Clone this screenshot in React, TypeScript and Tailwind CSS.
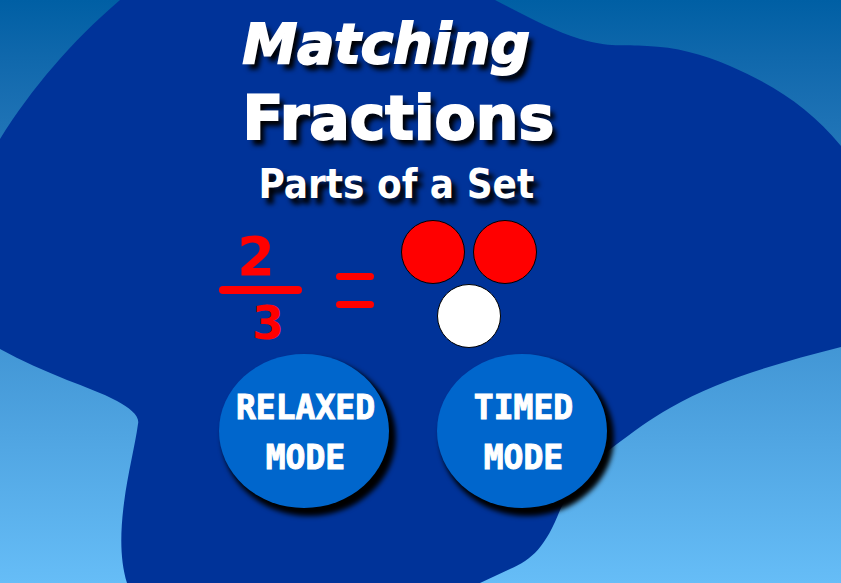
import type { ReactNode } from "react";

function Backdrop() {
  return (
    <svg
      className="absolute inset-0 -z-10 h-full w-full"
      viewBox="0 0 841 583"
      preserveAspectRatio="none"
      aria-hidden="true"
    >
      <path
        fill="#003399"
        d="M120 0C71 42 32 88 0 139V349C22 361 45 371 67 380C85 387 102 393 117 401C130 408 140 416 138 424C135 446 128 472 124 503C120 534 120 560 127 583H480L510 569C532 560 546 546 560 510C575 480 595 462 613 447C633 432 650 419 670 408C720 379 779 363 841 347V146C810 108 774 85 730 66C703 54 675 47 647 46C623 44 610 48 580 39C552 30 528 17 495 0Z"
      />
    </svg>
  );
}

function Disc({ className }: { className: string }) {
  return <div className={`size-16 rounded-full border border-black ${className}`} />;
}

function ModeButton({ children }: { children: ReactNode }) {
  return (
    <button
      type="button"
      className="h-[154px] w-[170px] cursor-pointer rounded-[50%] bg-[#0066cc] pt-1 pl-1 font-['DejaVu_Sans_Mono',monospace] text-[33px] leading-[50px] font-bold text-white shadow-[5px_6px_5px_2px_#000] [-webkit-text-stroke:1px_#fff]"
    >
      {children}
    </button>
  );
}

export default function App() {
  return (
    <main className="relative isolate min-h-screen overflow-hidden bg-linear-to-b from-[#005fa4] to-[#66bdf7]">
      <Backdrop />
      <div className="mx-auto flex w-full max-w-[404px] flex-col pt-2">
        <h1 className="pl-6 font-['DejaVu_Sans',sans-serif] font-bold whitespace-nowrap text-white [text-shadow:5px_6px_5px_#000] [-webkit-text-stroke:2px_#fff]">
          <span className="block text-[55px] leading-[72px] italic">Matching</span>
          <span className="block text-[60px] leading-[76px]">Fractions</span>
        </h1>
        <h2 className="pl-10 font-['DejaVu_Sans_Condensed','DejaVu_Sans',sans-serif] text-[40px] leading-[56px] font-bold whitespace-nowrap text-white [text-shadow:5px_6px_5px_#000]">
          Parts of a Set
        </h2>
        <div className="mt-2 flex h-32 items-center">
          <div className="flex items-center pt-3">
            <div className="flex w-[83px] flex-col items-center font-['DejaVu_Sans',sans-serif] font-bold text-[#ff0000]">
              <span className="pr-2 text-[54px] leading-[58px]">2</span>
              <span className="h-2 w-full rounded-full bg-[#ff0000]" />
              <span className="pl-4 text-[46px] leading-[58px]">3</span>
            </div>
            <div className="ml-[34px] flex w-[38px] flex-col gap-[21px]" role="img" aria-label="equals">
              <span className="h-[7px] rounded-full bg-[#ff0000]" />
              <span className="h-[7px] rounded-full bg-[#ff0000]" />
            </div>
          </div>
          <div className="ml-[27px] flex flex-col items-center" role="img" aria-label="Two of three discs are red">
            <div className="flex gap-2">
              <Disc className="bg-[#ff0000]" />
              <Disc className="bg-[#ff0000]" />
            </div>
            <Disc className="bg-white" />
          </div>
        </div>
        <div className="mt-1.5 flex gap-12">
          <ModeButton>
            RELAXED
            <br />
            MODE
          </ModeButton>
          <ModeButton>
            TIMED
            <br />
            MODE
          </ModeButton>
        </div>
      </div>
    </main>
  );
}
